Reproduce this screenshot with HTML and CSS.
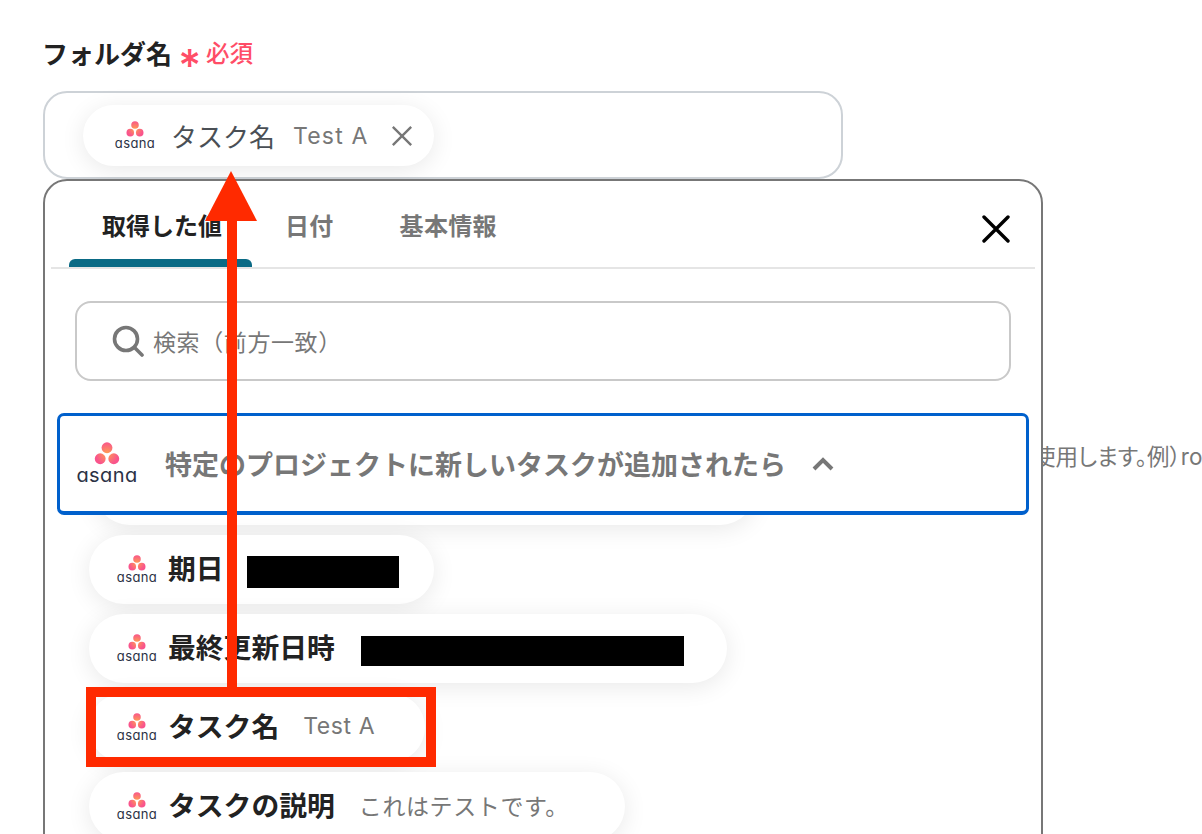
FILE: index.html
```html
<!DOCTYPE html>
<html lang="ja">

<head>
    <meta charset="UTF-8">
    <meta name="viewport" content="width=device-width, initial-scale=1.0">
    <title>フォルダ名</title>
    <link rel="stylesheet" href="styles.css">
</head>

<body>

    <svg class="defs" width="0" height="0">
        <defs>
            <radialGradient id="asana-dots" gradientUnits="userSpaceOnUse" cx="12" cy="11" r="11">
                <stop offset="0" stop-color="#ffa04f" />
                <stop offset="1" stop-color="#f9548c" />
            </radialGradient>
            <symbol id="dots" viewBox="0 0 24 22">
                <g fill="url(#asana-dots)">
                    <circle cx="12" cy="5.5" r="5.2" />
                    <circle cx="5.5" cy="16" r="5.2" />
                    <circle cx="18.5" cy="16" r="5.2" />
                </g>
            </symbol>
        </defs>
    </svg>

    <div id="page">
        <div class="field-label">フォルダ名 <span class="required"><span class="star">*</span>必須</span></div>

        <div class="field">
            <div class="chip chip-selected">
                <span class="logo"><svg class="dots"><use href="#dots" /></svg><span class="wordmark">asana</span></span>
                <span class="chip-name">タスク名</span>
                <span class="chip-value">Test A</span>
                <svg class="chip-close" viewBox="0 0 24 24"><path d="M2 2 22 22M22 2 2 22" /></svg>
            </div>
        </div>

        <p class="hint">使用します。例）ro</p>

        <!-- dropdown sits over the hint text -->
        <div id="menu">
            <div class="tabs">
                <div class="tab tab-active">取得した値</div>
                <div class="tab">日付</div>
                <div class="tab">基本情報</div>
                <svg class="menu-close" viewBox="0 0 28 28"><path d="M2 2 26 26M26 2 2 26" /></svg>
            </div>

            <div class="search">
                <svg class="search-icon" viewBox="0 0 32 32"><circle cx="14" cy="14" r="11.5" /><path d="M22.5 22.5 30 30" /></svg>
                <span>検索（前方一致）</span>
            </div>

            <div class="group-head">
                <span class="logo logo-large"><svg class="dots"><use href="#dots" /></svg><span class="wordmark">asana</span></span>
                <span class="group-title">特定のプロジェクトに新しいタスクが追加されたら</span>
                <svg class="chevron" viewBox="0 0 22 14"><path d="M2 12 11 3 20 12" /></svg>
            </div>

            <div class="values">
                <div class="chip value-row row-cut"></div>
                <div class="chip value-row row-date">
                    <span class="logo"><svg class="dots"><use href="#dots" /></svg><span class="wordmark">asana</span></span>
                    <span class="row-name">期日</span>
                    <span class="redacted redacted-date"></span>
                </div>
                <div class="chip value-row row-updated">
                    <span class="logo"><svg class="dots"><use href="#dots" /></svg><span class="wordmark">asana</span></span>
                    <span class="row-name">最終更新日時</span>
                    <span class="redacted redacted-updated"></span>
                </div>
                <div class="chip value-row row-task">
                    <span class="logo"><svg class="dots"><use href="#dots" /></svg><span class="wordmark">asana</span></span>
                    <span class="row-name">タスク名</span>
                    <span class="row-value">Test A</span>
                </div>
                <div class="chip value-row row-desc">
                    <span class="logo"><svg class="dots"><use href="#dots" /></svg><span class="wordmark">asana</span></span>
                    <span class="row-name">タスクの説明</span>
                    <span class="row-value">これはテストです。</span>
                </div>
            </div>
        </div>

        <!-- red annotation drawn on top of the screenshot -->
        <svg id="annotation" viewBox="0 0 1202 834">
            <rect x="91" y="692" width="340" height="70" />
            <path d="M227 221H237V688H227Z" />
            <path d="M231 171 257 221H205Z" />
        </svg>
    </div>

</body>

</html>
```

FILE: styles.css
```css
html,
body {
    margin: 0;
    padding: 0;
    background-color: #fff;
}

body {
    font-family: Inter, "Noto Sans CJK JP", sans-serif;
    color: #222;
}

.defs {
    display: block;
}

#page {
    position: relative;
    height: 834px;
    overflow: hidden;
    padding: 34px 0 0 43px;
    box-sizing: border-box;
}

.field-label {
    display: flex;
    align-items: center;
    height: 36px;
    margin-left: -1px;
    font-size: 26px;
    font-weight: 700;
    white-space: pre;
}

.required {
    display: flex;
    align-items: center;
    font-size: 23.5px;
    font-weight: 500;
    color: #ff4d67;
}

.star {
    font-size: 44px;
    line-height: 23px;
    margin-top: 27px;
    margin-right: 5px;
    font-weight: 500;
}

.field {
    width: 800px;
    height: 88px;
    margin-top: 21px;
    box-sizing: border-box;
    border: 2px solid #cdd2d7;
    border-radius: 24px;
    padding: 12px 38px;
}

.chip {
    display: flex;
    align-items: center;
    background-color: #fff;
    border-radius: 35px;
    box-shadow: 0 4px 24px rgba(0, 0, 0, 0.09);
}

.chip-selected {
    width: 351px;
    height: 61px;
    box-sizing: border-box;
    padding-left: 32px;
}

.logo {
    display: flex;
    flex-direction: column;
    align-items: center;
    width: 40px;
    flex-shrink: 0;
}

.dots {
    width: 18px;
    height: 16px;
}

.wordmark {
    font-size: 13px;
    line-height: 13px;
    letter-spacing: 0.4px;
    color: #2b3245;
    font-feature-settings: "cv11";
}

.chip-name {
    margin-left: 16px;
    font-size: 26px;
    color: #4a4f55;
}

.chip-value {
    margin-left: 18px;
    font-size: 23px;
    letter-spacing: 1.2px;
    color: #777;
}

.chip-close {
    width: 22px;
    height: 22px;
    margin-left: 22px;
    fill: none;
    stroke: #777;
    stroke-width: 2.6;
}

.hint {
    margin: 0;
    position: absolute;
    top: 439px;
    left: 1033px;
    font-size: 22.5px;
    font-feature-settings: "palt";
    white-space: nowrap;
    color: #777;
}

#menu {
    position: absolute;
    top: 179px;
    left: 43px;
    width: 1000px;
    height: 700px;
    box-sizing: border-box;
    padding: 0 6px;
    background-color: #fff;
    border: 2px solid #777;
    border-radius: 24px;
}

.tabs {
    display: flex;
    align-items: flex-start;
    height: 86px;
    padding-left: 18px;
    border-bottom: 2px solid #e5e5e5;
}

.tab {
    height: 86px;
    line-height: 91px;
    font-size: 24px;
    font-weight: 700;
    letter-spacing: 0.3px;
    color: #777;
    padding: 0 33px;
    white-space: nowrap;
}

.tab-active {
    position: relative;
    color: #222;
    letter-spacing: 0;
    padding-right: 30px;
}

.tab-active::after {
    content: "";
    position: absolute;
    left: 0;
    right: 0;
    bottom: 0;
    height: 8px;
    background-color: #0a6a85;
    border-radius: 6px 6px 0 0;
}

.menu-close {
    width: 28px;
    height: 28px;
    margin: 34px 25px 0 auto;
    fill: none;
    stroke: #000;
    stroke-width: 3.4;
    stroke-linecap: round;
}

.search {
    display: flex;
    align-items: center;
    width: 936px;
    height: 80px;
    margin: 32px 0 0 24px;
    box-sizing: border-box;
    border: 2px solid #c9c9c9;
    border-radius: 16px;
    padding-left: 35px;
    font-size: 23px;
    letter-spacing: 0.6px;
    color: #777;
}

.search-icon {
    width: 32px;
    height: 32px;
    margin-right: 9px;
    fill: none;
    stroke: #777;
    stroke-width: 3.6;
    stroke-linecap: round;
}

.group-head {
    position: relative;
    z-index: 1;
    display: flex;
    align-items: center;
    width: 972px;
    height: 102px;
    margin: 32px 0 0 6px;
    box-sizing: border-box;
    border: 3px solid #0060cc;
    border-bottom-width: 4px;
    border-radius: 7px;
    background-color: #fff;
    padding-left: 16px;
}

.logo-large {
    width: 62px;
}

.logo-large .dots {
    width: 26px;
    height: 23px;
}

.logo-large .wordmark {
    font-size: 20px;
    line-height: 20px;
}

.group-title {
    margin-left: 27px;
    font-size: 27px;
    font-weight: 700;
    color: #777;
    white-space: nowrap;
}

.chevron {
    width: 22px;
    height: 14px;
    margin-left: 26px;
    fill: none;
    stroke: #777;
    stroke-width: 4;
}

.values {
    display: flex;
    flex-direction: column;
    align-items: flex-start;
    gap: 10px;
    margin: -59px 0 0 38px;
}

.value-row {
    height: 69px;
    box-sizing: border-box;
    padding-left: 28px;
}

.row-cut {
    width: 660px;
    margin-left: 6px;
}

.row-date {
    width: 345px;
}

.row-updated {
    width: 638px;
}

.row-task {
    width: 336px;
}

.row-desc {
    width: 536px;
}

.row-name {
    margin: -5px 0 0 11px;
    font-size: 27.8px;
    font-weight: 700;
    white-space: nowrap;
}

.row-value {
    margin: -4px 0 0 24px;
    font-size: 23px;
    letter-spacing: 0.6px;
    color: #777;
    white-space: nowrap;
}

.redacted {
    display: block;
    background-color: #000;
    margin-top: 4px;
}

.redacted-date {
    width: 152px;
    height: 32px;
    margin-left: 23px;
}

.redacted-updated {
    width: 323px;
    height: 30px;
    margin-left: 26px;
}

#annotation {
    position: absolute;
    z-index: 2;
    top: 0;
    left: 0;
    width: 1202px;
    height: 834px;
}

#annotation rect {
    fill: none;
    stroke: #ff2a00;
    stroke-width: 10;
}

#annotation path {
    fill: #ff2a00;
}
```
